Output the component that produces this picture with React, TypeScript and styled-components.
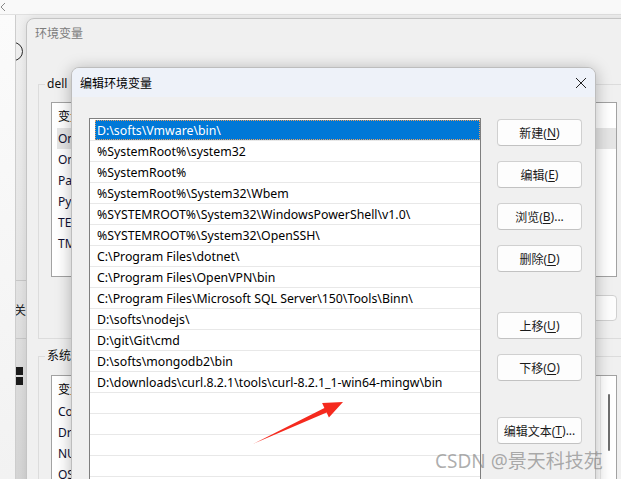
import styled, { createGlobalStyle } from "styled-components";

const GlobalStyle = createGlobalStyle`
  html, body {
    margin: 0;
    padding: 0;
  }

  body {
    font-family: "Noto Sans", "Noto Sans CJK SC", sans-serif;
    font-size: 12px;
    color: #000;
  }

  * {
    box-sizing: border-box;
  }
`;

const Screen = styled.div`
  position: relative;
  width: 621px;
  height: 479px;
  overflow: hidden;
  background: #f0f0f0;
`;

/* window at the very back */

const BackWindow = styled.div`
  position: absolute;
  inset: 0;
  display: flex;
  flex-direction: column;
`;

const BackTopBar = styled.div`
  height: 15px;
  flex-shrink: 0;
  background: #f9f9f9;
  border-bottom: 1px solid #e0e0e0;
  display: flex;
  align-items: center;
`;

const BackBody = styled.div`
  flex: 1;
  display: flex;
`;

const BackSidebar = styled.div`
  width: 16px;
  background: linear-gradient(#fbfbfb, #f2f2f2);
  border-right: 1px solid #cdcdcd;
`;

const BackStrip = styled.div`
  width: 12px;
  overflow: hidden;
  background: linear-gradient(#f0f0f0 0%, #e6e6e6 45%, #d4d4d4 100%);
  display: flex;
  flex-direction: column;

  & > * {
    flex-shrink: 0;
  }
`;

const RoundIcon = styled.div`
  width: 19px;
  height: 19px;
  margin: 27px 0 0 -12px;
  border: 1.5px solid #2b2b2b;
  border-radius: 50%;
`;

const StripItem = styled.div`
  height: 59px;
  margin-top: 219px;
  margin-left: -2px;
  border-top: 1px solid #c6c6c6;
  border-bottom: 1px solid #c6c6c6;
  display: flex;
  align-items: center;
  color: #222;
`;

const BlackSquare = styled.div<{ $mt: number }>`
  width: 7px;
  height: 8px;
  margin-top: ${(p) => p.$mt}px;
  background: #1b1b1b;
`;

/* 环境变量 window */

const EnvWindow = styled.div`
  position: absolute;
  left: 26px;
  top: 18px;
  width: 640px;
  height: 480px;
  background: #f0f0f0;
  border: 1px solid #c4c4c4;
  border-radius: 8px 8px 0 0;
  box-shadow: 0 0 8px rgba(0, 0, 0, 0.1);
  display: flex;
  flex-direction: column;
  overflow: hidden;

  & > * {
    flex-shrink: 0;
  }
`;

const EnvTitle = styled.div`
  height: 27px;
  padding-left: 8px;
  display: flex;
  align-items: center;
  color: #7c7c7c;
`;

const GroupBox = styled.fieldset<{ $mt: number; $pt: number }>`
  margin: ${(p) => p.$mt}px 0 0 11px;
  width: 592px;
  min-width: 0;
  border: 1px solid #dcdcdc;
  padding: ${(p) => p.$pt}px 12px 17px;
`;

const GroupLegend = styled.legend`
  margin-left: -6px;
  padding: 0 2px;
  line-height: 16px;
  color: #111;
`;

const EnvList = styled.div<{ $h: number }>`
  height: ${(p) => p.$h}px;
  background: #fff;
  border: 1px solid #a2a2a2;
  display: flex;
  overflow: hidden;
`;

const EnvRows = styled.div`
  flex: 1;
  display: flex;
  flex-direction: column;
`;

const EnvHeader = styled.div`
  height: 25px;
  flex-shrink: 0;
  padding-left: 6px;
  display: flex;
  align-items: center;
`;

const EnvRow = styled.div<{ $hover?: boolean }>`
  height: 21px;
  flex-shrink: 0;
  margin-left: 5px;
  padding-left: 1px;
  display: flex;
  align-items: center;
  color: #101030;
  background: ${(p) => (p.$hover ? "#e5e5e5" : "transparent")};
`;

const ScrollTrack = styled.div`
  width: 16px;
  flex-shrink: 0;
  border-left: 1px solid #ececec;
  display: flex;
  justify-content: center;
`;

const ScrollThumb = styled.div`
  width: 2px;
  height: 57px;
  margin-top: 18px;
  border-radius: 1px;
  background: #6f6f6f;
`;

const EnvButtonRow = styled.div`
  margin-top: 18px;
  display: flex;
  justify-content: flex-end;
  gap: 8px;
`;

const EnvButton = styled.div`
  width: 95px;
  height: 26px;
  border: 1px solid #d0d0d0;
  border-radius: 4px;
  background: #fdfdfd;
  display: flex;
  align-items: center;
  justify-content: center;
`;

/* 编辑环境变量 dialog */

const EditDialog = styled.div`
  position: absolute;
  left: 71px;
  top: 67px;
  width: 525px;
  height: 430px;
  background: #f0f0f0;
  border: 1px solid #bdbdbd;
  border-radius: 8px 8px 0 0;
  box-shadow: 0 2px 16px rgba(0, 0, 0, 0.28);
  display: flex;
  flex-direction: column;
  overflow: hidden;
`;

const DialogTitleBar = styled.div`
  height: 29px;
  flex-shrink: 0;
  background: #eef2f9;
  padding: 0 8px;
  display: flex;
  align-items: center;
  justify-content: space-between;
`;

const DialogBody = styled.div`
  flex: 1;
  display: flex;
  gap: 16px;
  padding: 21px 13px 0 17px;
`;

const PathList = styled.div`
  width: 392px;
  flex-shrink: 0;
  background: #fff;
  border: 1px solid #7f7f7f;
  padding-top: 1px;
  display: flex;
  flex-direction: column;
`;

const PathRow = styled.div`
  height: 21px;
  flex-shrink: 0;
  border-bottom: 1px solid #e8e8e8;
  display: flex;
`;

const PathLabel = styled.div<{ $selected?: boolean }>`
  flex: 1;
  margin-left: 5px;
  padding-left: 2px;
  display: flex;
  align-items: center;
  white-space: nowrap;
  font-size: 12.3px;
  color: ${(p) => (p.$selected ? "#fff" : "#000")};
  background: ${(p) => (p.$selected ? "#0078d7" : "transparent")};
  outline: ${(p) => (p.$selected ? "1px dotted #e9a060" : "none")};
  outline-offset: -1px;
`;

const ButtonColumn = styled.div`
  width: 85px;
  padding-top: 1px;
  display: flex;
  flex-direction: column;
  gap: 15px;
`;

const DialogButton = styled.div<{ $extra?: number }>`
  height: 27px;
  flex-shrink: 0;
  margin-top: ${(p) => p.$extra ?? 0}px;
  border: 1px solid #d0d0d0;
  border-bottom-color: #c2c2c2;
  border-radius: 4px;
  background: #fdfdfd;
  display: flex;
  align-items: center;
  justify-content: center;
  color: #1a1a1a;
`;

const Mnemonic = styled.span`
  text-decoration: underline;
  text-underline-offset: 2px;
`;

/* overlays */

const Watermark = styled.div`
  position: absolute;
  left: 435px;
  top: 446px;
  font-size: 19px;
  color: rgba(120, 120, 120, 0.6);
  white-space: nowrap;
`;

const ArrowLayer = styled.svg`
  position: absolute;
  left: 0;
  top: 0;
  pointer-events: none;
`;

const paths = [
  "D:\\softs\\Vmware\\bin\\",
  "%SystemRoot%\\system32",
  "%SystemRoot%",
  "%SystemRoot%\\System32\\Wbem",
  "%SYSTEMROOT%\\System32\\WindowsPowerShell\\v1.0\\",
  "%SYSTEMROOT%\\System32\\OpenSSH\\",
  "C:\\Program Files\\dotnet\\",
  "C:\\Program Files\\OpenVPN\\bin",
  "C:\\Program Files\\Microsoft SQL Server\\150\\Tools\\Binn\\",
  "D:\\softs\\nodejs\\",
  "D:\\git\\Git\\cmd",
  "D:\\softs\\mongodb2\\bin",
  "D:\\downloads\\curl.8.2.1\\tools\\curl-8.2.1_1-win64-mingw\\bin",
  "",
  "",
  "",
  "",
  "",
];

const userVars = ["OneDrive", "OneDriveConsumer", "Path", "PyCharm", "TEMP", "TMP"];
const systemVars = ["ComSpec", "DriverData", "NUMBER_OF_PROCESSORS", "OS"];

const buttons: { label: string; key: string; tail?: string; extra?: number }[] = [
  { label: "新建", key: "N" },
  { label: "编辑", key: "E" },
  { label: "浏览", key: "B", tail: "..." },
  { label: "删除", key: "D" },
  { label: "上移", key: "U", extra: 25 },
  { label: "下移", key: "O" },
  { label: "编辑文本", key: "T", tail: "...", extra: 21 },
];

const App = () => {
  return (
    <Screen>
      <GlobalStyle />

      {/* back window */}
      <BackWindow>
        <BackTopBar>
          <svg width="7" height="14" viewBox="0 0 7 14">
            <polyline points="5,3 1,7 5,11" fill="none" stroke="#8a8a8a" strokeWidth="1" />
          </svg>
        </BackTopBar>
        <BackBody>
          <BackSidebar />
          <BackStrip>
            <RoundIcon />
            <StripItem>关</StripItem>
            <BlackSquare $mt={28} />
            <BlackSquare $mt={2} />
          </BackStrip>
        </BackBody>
      </BackWindow>

      {/* 环境变量 */}
      <EnvWindow>
        <EnvTitle>环境变量</EnvTitle>
        <GroupBox $mt={30} $pt={10}>
          <GroupLegend>dell 的用户变量(U)</GroupLegend>
          <EnvList $h={175}>
            <EnvRows>
              <EnvHeader>变量</EnvHeader>
              {userVars.map((v, i) => (
                <EnvRow key={v} $hover={i === 0}>
                  {v}
                </EnvRow>
              ))}
            </EnvRows>
          </EnvList>
          <EnvButtonRow>
            <EnvButton>新建(N)...</EnvButton>
            <EnvButton>编辑(E)...</EnvButton>
            <EnvButton>删除(D)</EnvButton>
          </EnvButtonRow>
        </GroupBox>
        <GroupBox $mt={9} $pt={11}>
          <GroupLegend>系统变量(S)</GroupLegend>
          <EnvList $h={140}>
            <EnvRows>
              <EnvHeader>变量</EnvHeader>
              {systemVars.map((v) => (
                <EnvRow key={v}>{v}</EnvRow>
              ))}
            </EnvRows>
            <ScrollTrack>
              <ScrollThumb />
            </ScrollTrack>
          </EnvList>
        </GroupBox>
      </EnvWindow>

      {/* 编辑环境变量 */}
      <EditDialog>
        <DialogTitleBar>
          <span>编辑环境变量</span>
          <svg width="12" height="12" viewBox="0 0 12 12">
            <path d="M1 1 L11 11 M11 1 L1 11" stroke="#222" strokeWidth="1" />
          </svg>
        </DialogTitleBar>
        <DialogBody>
          <PathList>
            {paths.map((p, i) => (
              <PathRow key={i}>
                <PathLabel $selected={i === 0}>{p}</PathLabel>
              </PathRow>
            ))}
          </PathList>
          <ButtonColumn>
            {buttons.map((b) => (
              <DialogButton key={b.key} $extra={b.extra}>
                {b.label}(<Mnemonic>{b.key}</Mnemonic>){b.tail}
              </DialogButton>
            ))}
          </ButtonColumn>
        </DialogBody>
      </EditDialog>

      <ArrowLayer width="621" height="479" viewBox="0 0 621 479">
        <polygon
          points="253,444 324.4,407.9 322.1,403 343,402 328.9,417.5 326.6,412.5"
          fill="#f52a1e"
        />
      </ArrowLayer>

      <Watermark>CSDN @景天科技苑</Watermark>
    </Screen>
  );
};

export default App;
